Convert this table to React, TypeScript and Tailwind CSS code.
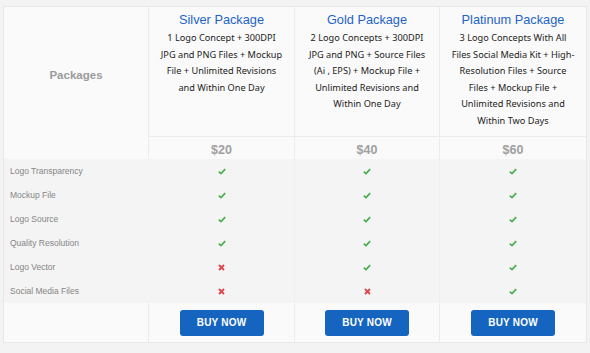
import React from 'react';

type Pkg = { name: string; desc: string; price: string; features: boolean[] };

const FEATURES = ['Logo Transparency', 'Mockup File', 'Logo Source', 'Quality Resolution', 'Logo Vector', 'Social Media Files'];

const PACKAGES: Pkg[] = [
  {
    name: 'Silver Package',
    desc: '1 Logo Concept + 300DPI JPG and PNG Files + Mockup File + Unlimited Revisions and Within One Day',
    price: '$20',
    features: [true, true, true, true, false, false],
  },
  {
    name: 'Gold Package',
    desc: '2 Logo Concepts + 300DPI JPG and PNG + Source Files (Ai , EPS) + Mockup File + Unlimited Revisions and Within One Day',
    price: '$40',
    features: [true, true, true, true, true, false],
  },
  {
    name: 'Platinum Package',
    desc: '3 Logo Concepts With All Files Social Media Kit + High-Resolution Files + Source Files + Mockup File + Unlimited Revisions and Within Two Days',
    price: '$60',
    features: [true, true, true, true, true, true],
  },
];

const Check = () => (
  <svg width="8" height="7" viewBox="0 0 8 7">
    <path d="M0.8 3.6 L3 5.6 L7.2 1.2" fill="none" stroke="#4caf50" strokeWidth="1.8" />
  </svg>
);

const Cross = () => (
  <svg width="7" height="7" viewBox="0 0 7 7">
    <path d="M1 1 L6 6 M6 1 L1 6" fill="none" stroke="#e0454b" strokeWidth="1.8" />
  </svg>
);

const App: React.FC = () => {
  return (
    <div className="h-[353px] w-[590px] bg-[#f3f3f3] pt-[6px] pl-[3px] font-['Liberation_Sans',Arial,sans-serif]">
      <div className="w-[584px] border border-[#e8e8e8] bg-[#fafafa] grid grid-cols-[145px_146px_145px_146px] grid-rows-[130px_22px_repeat(6,24px)_39px]">
        <div className="row-span-2 flex items-center justify-center pb-[14px] text-[11.5px] font-bold text-[#9b9b9b] border-r border-[#ececec]">
          Packages
        </div>
        {PACKAGES.map((p, i) => (
          <div key={p.name} className={`flex flex-col items-center pt-[5px] px-[10px] border-b border-[#ececec] ${i < 2 ? 'border-r' : ''}`}>
            <div className="text-[12.75px] leading-[16px] text-[#1e64c8]">{p.name}</div>
            <div className="mt-[2px] text-center text-[9.2px] leading-[16.5px] text-[#222] font-['Noto_Sans',sans-serif]">
              {p.desc}
            </div>
          </div>
        ))}
        {PACKAGES.map((p, i) => (
          <div key={p.price} className={`flex items-center justify-center pt-[5px] text-[12.5px] font-bold text-[#a0a0a0] border-[#ececec] ${i < 2 ? 'border-r' : ''}`}>
            {p.price}
          </div>
        ))}
        {FEATURES.map((f, r) => (
          <React.Fragment key={f}>
            <div className="bg-[#f4f4f4] flex items-center pl-[6px] text-[8.5px] text-[#858585]">{f}</div>
            {PACKAGES.map((p, i) => (
              <div key={p.name} className={`bg-[#f4f4f4] flex items-center justify-center border-[#efefef] ${i < 2 ? 'border-r' : ''}`}>
                {p.features[r] ? <Check /> : <Cross />}
              </div>
            ))}
          </React.Fragment>
        ))}
        <div className="border-r border-[#ececec]" />
        {PACKAGES.map((p, i) => (
          <div key={p.name} className={`flex items-center justify-center border-[#ececec] ${i < 2 ? 'border-r' : ''}`}>
            <button className="w-[84px] h-[26px] rounded-[3px] bg-[#1565c0] text-white text-[10px] font-semibold tracking-[0.2px]">
              BUY NOW
            </button>
          </div>
        ))}
      </div>
    </div>
  );
};

export default App;
